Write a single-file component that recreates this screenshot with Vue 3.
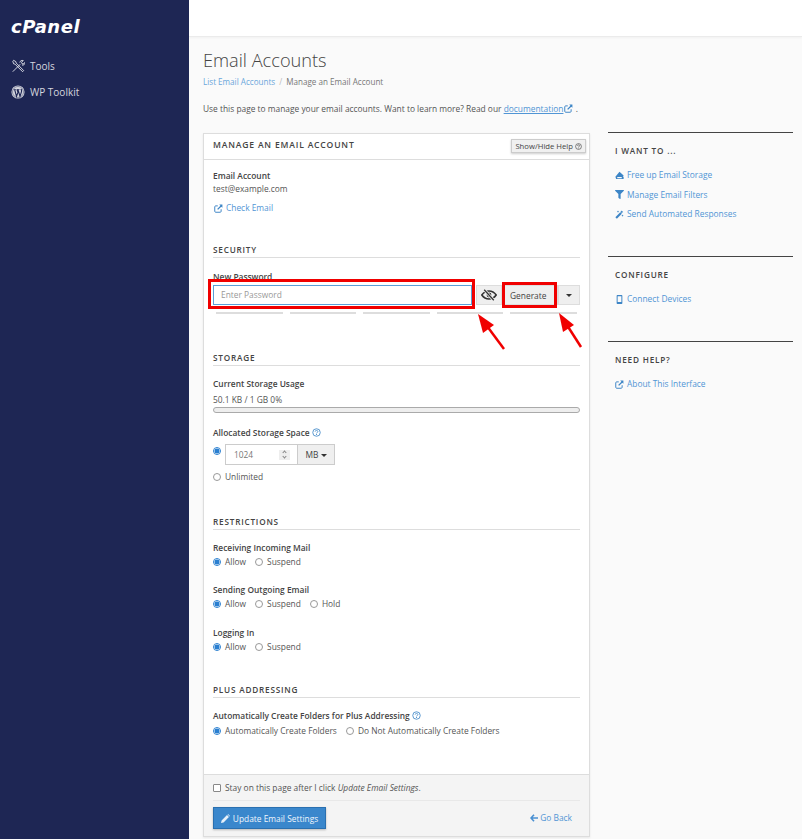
<script setup>
const wantTo = [
  { icon: 'eraser', label: 'Free up Email Storage' },
  { icon: 'filter', label: 'Manage Email Filters' },
  { icon: 'wand', label: 'Send Automated Responses' },
]
const restrictions = [
  { label: 'Receiving Incoming Mail', options: ['Allow', 'Suspend'] },
  { label: 'Sending Outgoing Email', options: ['Allow', 'Suspend', 'Hold'] },
  { label: 'Logging In', options: ['Allow', 'Suspend'] },
]
</script>

<template>
  <div class="layout">
    <aside class="sidebar">
      <div class="logo">cPanel</div>
      <a class="nav-item">
        <svg class="nav-icon" viewBox="0 0 16 16" fill="none" stroke="#e8e9ef" stroke-width="1">
          <path d="M2 14.500 10.500 6M10 4c.4-1.800 2.200-2.800 4-2.200l-2 2 .5 1.500 1.500.5 2-2c.4 1.800-1.200 3.500-3.500 3.200" />
          <path d="M2 2.500 3 1.500 5.500 3l.3 1.500 8.700 8.700-1.300 1.300L4.500 5.800 3 5.500z" />
        </svg>
        Tools
      </a>
      <a class="nav-item">
        <svg class="nav-icon" viewBox="0 0 16 16">
          <circle cx="8" cy="8" r="7.500" fill="#d5d6df" />
          <circle cx="8" cy="8" r="6.300" fill="none" stroke="#1e2654" stroke-width=".5" />
          <path d="M3 5.200h2.600M6.500 5.200h3.200M11 5 12.800 5" stroke="#1e2654" stroke-width=".8" />
          <path d="M4.200 5.200 6.300 13 8 8.300 6.900 5.200M8 5.200 10.300 13 12 7.500c.3-1 0-1.800-.5-2.500" fill="none" stroke="#1e2654" stroke-width="1.300" />
        </svg>
        WP Toolkit
      </a>
    </aside>

    <div class="main">
      <div class="topbar"></div>
      <div class="content">
        <h1>Email Accounts</h1>
        <div class="breadcrumb"><a>List Email Accounts</a><span class="sep">/</span>Manage an Email Account</div>
        <p class="intro">
          Use this page to manage your email accounts. Want to learn more? Read our
          <a class="doc">documentation</a>
          <svg class="ico ext" viewBox="0 0 12 12"><use href="#ext-icon" /></svg> .
        </p>

        <div class="columns">
          <section class="card">
            <header class="card-head">
              <span>MANAGE AN EMAIL ACCOUNT</span>
              <button class="help-btn">Show/Hide Help
                <svg class="q" viewBox="0 0 12 12"><use href="#q-icon" /></svg>
              </button>
            </header>

            <div class="card-body">
              <div class="field-label first">Email Account</div>
              <div class="plain account">test@example.com</div>
              <a class="link check"><svg class="ico" viewBox="0 0 12 12"><use href="#ext-icon" /></svg>Check Email</a>

              <h2 class="section security">SECURITY</h2>
              <div class="field-label pw-label">New Password</div>
              <div class="pw-row">
                <input class="pw-input" placeholder="Enter Password" />
                <button class="eye-btn">
                  <svg viewBox="0 0 20 14" width="16" height="12">
                    <path d="M1 7c2.500-3.500 5.500-5 9-5s6.500 1.500 9 5c-2.500 3.500-5.500 5-9 5s-6.500-1.500-9-5z" fill="none" stroke="#333" stroke-width="2" />
                    <circle cx="10" cy="7" r="3" fill="#333" />
                    <path d="M4 .5l12 13" stroke="#efefef" stroke-width="3.600" />
                    <path d="M4 .5l12 13" stroke="#333" stroke-width="1.600" />
                  </svg>
                </button>
                <button class="gen-btn">Generate</button>
                <button class="caret-btn"><i class="caret"></i></button>
                <div class="red-box box-input"></div>
                <div class="red-box box-gen"></div>
              </div>
              <div class="strength"><i></i><i></i><i></i><i></i><i></i></div>

              <h2 class="section storage">STORAGE</h2>
              <div class="field-label usage-label">Current Storage Usage</div>
              <div class="plain usage">50.1 KB / 1 GB 0%</div>
              <div class="progress"></div>
              <div class="field-label alloc-label">Allocated Storage Space
                <svg class="q blue" viewBox="0 0 12 12"><use href="#q-icon" /></svg>
              </div>
              <div class="alloc-row">
                <span class="radio on"></span>
                <div class="num-input">
                  <span>1024</span>
                  <span class="spin"><i class="up"></i><i class="down"></i></span>
                </div>
                <button class="mb-btn">MB <i class="caret"></i></button>
              </div>
              <div class="radio-row unlimited"><span class="radio"></span>Unlimited</div>

              <h2 class="section restrictions">RESTRICTIONS</h2>
              <div v-for="r in restrictions" :key="r.label" class="restriction">
                <div class="field-label">{{ r.label }}</div>
                <div class="radio-row">
                  <template v-for="(o, i) in r.options" :key="o">
                    <span class="radio" :class="{ on: i === 0 }"></span><span class="opt">{{ o }}</span>
                  </template>
                </div>
              </div>

              <h2 class="section plus">PLUS ADDRESSING</h2>
              <div class="field-label plus-label">Automatically Create Folders for Plus Addressing
                <svg class="q blue" viewBox="0 0 12 12"><use href="#q-icon" /></svg>
              </div>
              <div class="radio-row">
                <span class="radio on"></span><span class="opt">Automatically Create Folders</span>
                <span class="radio"></span><span class="opt">Do Not Automatically Create Folders</span>
              </div>
            </div>

            <footer class="card-foot">
              <label class="stay"><span class="check-box"></span>Stay on this page after I click&nbsp;<em>Update Email Settings</em>.</label>
              <div class="actions">
                <button class="update-btn">
                  <svg viewBox="0 0 12 12" width="9" height="9"><path d="M0 12l.8-3.400L8 1.400l2.600 2.600-7.200 7.200zM8.800.6l.6-.6 2.600 2.600-.6.6z" fill="#e6f0f9" /></svg>
                  Update Email Settings
                </button>
                <a class="link back">
                  <svg viewBox="0 0 12 12" width="8" height="8"><path d="M6 1 1.500 6 6 11M2 6h10" fill="none" stroke="#4a90d2" stroke-width="2.400" /></svg>
                  Go Back
                </a>
              </div>
            </footer>
          </section>

          <aside class="side">
            <div class="side-block want">
              <h3>I WANT TO ...</h3>
              <a v-for="w in wantTo" :key="w.label" class="link side-link">
                <svg class="ico" viewBox="0 0 12 12" v-if="w.icon === 'eraser'"><path d="M6 1 11.500 6 10.500 7.500H11.500V10.500H1.500L.5 7.500zM3 8v1.500h6V8z" fill="#3d85c6" fill-rule="evenodd" /></svg>
                <svg class="ico" viewBox="0 0 512 512" v-else-if="w.icon === 'filter'"><path d="M487.976 0H24.028C2.71 0-8.047 25.866 7.058 40.971L192 225.941V432c0 7.831 3.821 15.170 10.237 19.662l80 55.980C298.020 518.690 320 507.493 320 487.980V225.941l184.947-184.970C520.021 25.896 509.338 0 487.976 0z" fill="#3d85c6" /></svg>
                <svg class="ico" viewBox="0 0 12 12" v-else><path d="M.5 9.500 7 3l2 2-6.500 6.500zM9 .5l.7 1.300 1.300.7-1.300.7L9 4.500l-.7-1.300L7 2.500l1.300-.7zM4 .8l.5 1 1 .5-1 .5-.5 1-.5-1-1-.5 1-.5zM10 6l.5 1 1 .5-1 .5-.5 1-.5-1-1-.5 1-.5z" fill="#3d85c6" /></svg>
                {{ w.label }}
              </a>
            </div>
            <div class="side-block configure">
              <h3>CONFIGURE</h3>
              <a class="link side-link">
                <svg class="ico" viewBox="0 0 12 12"><path d="M3.200 0h5.600c.6 0 1 .4 1 1v10c0 .6-.4 1-1 1H3.200c-.6 0-1-.4-1-1V1c0-.6.4-1 1-1zm.3 1.500v7.800h5V1.500z" fill="#3d85c6" fill-rule="evenodd" /></svg>
                Connect Devices
              </a>
            </div>
            <div class="side-block need">
              <h3>NEED HELP?</h3>
              <a class="link side-link"><svg class="ico" viewBox="0 0 12 12"><use href="#ext-icon" /></svg>About This Interface</a>
            </div>
          </aside>
        </div>
      </div>
    </div>

    <svg class="arrows" viewBox="0 0 802 839" width="802" height="839">
      <path d="M504 349 484 322" stroke="#f00000" stroke-width="2.500" fill="none" />
      <path d="M478 314 494 325 483 333z" fill="#f00000" />
      <path d="M581 347 565 322" stroke="#f00000" stroke-width="2.500" fill="none" />
      <path d="M559 313 574 325 563 332z" fill="#f00000" />
    </svg>

    <svg width="0" height="0" class="defs">
      <defs>
        <g id="ext-icon">
          <path d="M5 2.500H2.200C1.500 2.500 1 3 1 3.700v6.100c0 .7.5 1.200 1.200 1.200h6.100c.7 0 1.200-.5 1.200-1.200V7" fill="none" stroke="#3d85c6" stroke-width="1.300" />
          <path d="M7 .8h4.200V5L9.700 3.500 5.500 7.800 4.200 6.500l4.300-4.200z" fill="#3d85c6" />
        </g>
        <g id="q-icon">
          <circle cx="6" cy="6" r="5" fill="none" stroke="currentColor" stroke-width="1.100" />
          <path d="M4.200 4.800C4.300 3.800 5 3.200 6 3.200s1.800.6 1.800 1.500c0 1.300-1.700 1.300-1.700 2.500" fill="none" stroke="currentColor" stroke-width="1.100" />
          <rect x="5.400" y="8" width="1.300" height="1.200" fill="currentColor" />
        </g>
      </defs>
    </svg>
  </div>
</template>

<style>
html, body { margin: 0; background: #fafafa; }
</style>

<style scoped>
* { box-sizing: border-box; }
.layout {
  position: relative;
  display: flex;
  width: 802px;
  height: 839px;
  overflow: hidden;
  font-family: "Open Sans", sans-serif;
  font-size: 8.400px;
  line-height: 12px;
  color: #555;
  background: #fafafa;
}
a { color: #5095d5; }

.sidebar {
  width: 189px;
  flex: none;
  background: #1e2654;
  padding-top: 14px;
}
.logo {
  margin: 0 0 13px 11px;
  height: 26px;
  color: #fff;
  font-family: "DejaVu Sans", sans-serif;
  font-size: 18px;
  font-weight: 700;
  font-style: italic;
  line-height: 26px;
  letter-spacing: 0.500px;
}
.nav-item {
  display: flex;
  align-items: center;
  gap: 5px;
  height: 26px;
  padding-left: 11px;
  font-size: 10px;
  color: #d5d6df;
}
.nav-icon { width: 14px; height: 14px; }

.main { flex: 1; min-width: 0; }
.topbar {
  height: 37px;
  background: #fff;
  border-bottom: 1px solid #ebebeb;
  box-shadow: 0 1px 2px rgba(0,0,0,.04);
}
.content { padding: 11px 9px 0 14px; }
h1 {
  margin: 0;
  font-size: 18.200px;
  font-weight: 300;
  line-height: 24px;
  color: #444;
}
.breadcrumb { margin-top: 3px; color: #777; height: 14px; line-height: 14px; font-size: 8.100px; }
.breadcrumb a { color: #6aa6da; }
.sep { color: #bbb; margin: 0 4px; }
.intro { margin: 13px 0 0; height: 14px; line-height: 14px; color: #555; }
.doc { text-decoration: underline; }
.ico { width: 9px; height: 9px; flex: none; }
.ext { vertical-align: -1px; margin-left: 1px; }

.columns { display: flex; align-items: flex-start; margin-top: 17px; }
.card {
  width: 387px;
  height: 704px;
  flex: none;
  display: flex;
  flex-direction: column;
  background: #fff;
  border: 1px solid #ddd;
  box-shadow: 0 1px 2px rgba(0,0,0,.08);
}
.card-head {
  height: 26px;
  flex: none;
  display: flex;
  align-items: flex-start;
  justify-content: space-between;
  padding: 5px 3px 0 9px;
  border-bottom: 1px solid #ddd;
  font-size: 8.600px;
  font-weight: 600;
  letter-spacing: 0.800px;
  color: #444;
}
.help-btn {
  margin-top: 0;
  height: 14px;
  padding: 0 3px;
  border: 1px solid #ccc;
  background: #f0f0f0;
  box-shadow: 0 1px 2px rgba(0,0,0,.2);
  font: 7.700px "Open Sans", sans-serif;
  color: #444;
  display: flex;
  align-items: center;
  gap: 2px;
  letter-spacing: 0;
}
.q { width: 7px; height: 7px; color: #444; }
.q.blue { color: #3d85c6; width: 9px; height: 9px; vertical-align: -1px; }

.card-body { flex: 1; padding: 0 9px; }
.field-label { font-weight: 600; color: #444; height: 12px; }
.first { margin-top: 10px; }
.plain { height: 12px; }
.account { margin-top: 1px; }
.link { display: flex; align-items: center; gap: 3px; color: #5095d5; }
.check { margin: 7px 0 0 1px; height: 12px; }

.section {
  margin: 0;
  height: 14px;
  font-size: 8.200px;
  font-weight: 600;
  letter-spacing: 0.800px;
  line-height: 11px;
  color: #444;
  border-bottom: 1px solid #ddd;
}
.security { margin-top: 30px; }
.pw-label { margin-top: 13px; }
.pw-row { position: relative; display: flex; height: 20px; margin-top: 2px; }
.pw-input {
  width: 259px;
  height: 20px;
  border: 1px solid #5a9fd8;
  padding: 0 7px 2px;
  font: 8.400px "Open Sans", sans-serif;
  outline: none;
}
.pw-input::placeholder { color: #999; }
.eye-btn {
  width: 26px;
  margin-left: 4px;
  padding: 0;
  display: flex;
  align-items: center;
  justify-content: center;
  background: #efefef;
  border: 1px solid #ddd;
}
.gen-btn {
  width: 54px;
  margin-left: 2px;
  padding: 0 0 0 5px;
  text-align: left;
  background: #efefef;
  border: 1px solid #ddd;
  font: 8.400px "Open Sans", sans-serif;
  color: #444;
}
.caret-btn {
  width: 22px;
  padding: 0;
  background: #efefef;
  border: 1px solid #ddd;
  display: flex;
  align-items: center;
  justify-content: center;
}
.caret {
  display: inline-block;
  border-top: 3px solid #333;
  border-left: 3px solid transparent;
  border-right: 3px solid transparent;
  vertical-align: 1px;
}
.red-box { position: absolute; border: 3px solid #f00000; }
.box-input { left: -5px; top: -6px; width: 267px; height: 30px; }
.box-gen { left: 289px; top: -3px; width: 55px; height: 26px; }
.strength { display: flex; gap: 7px; margin: 7px 3px 0; }
.strength i { flex: 1; height: 2px; background: #ddd; }

.storage { margin-top: 38px; }
.usage-label { margin-top: 12px; }
.usage { margin-top: 4px; }
.progress {
  height: 6px;
  margin-top: 1px;
  border: 1px solid #aaa;
  border-radius: 3px;
  background: #eee;
}
.alloc-label { margin-top: 14px; }
.alloc-row { display: flex; margin-top: 5px; height: 21px; }
.radio {
  width: 8px;
  height: 8px;
  flex: none;
  border: 1px solid #999;
  border-radius: 50%;
  background: #fff;
  margin-right: 4px;
}
.radio.on {
  border: 1px solid #2a7fd0;
  background: radial-gradient(circle, #2a7fd0 0 2.300px, #fff 2.700px);
}
.alloc-row .radio { margin-top: 3px; }
.num-input {
  width: 73px;
  display: flex;
  align-items: center;
  justify-content: space-between;
  padding: 0 8px;
  border: 1px solid #ccc;
  color: #777;
}
.spin {
  width: 11px;
  height: 10px;
  background: #eee;
  display: flex;
  flex-direction: column;
  align-items: center;
  justify-content: center;
  gap: 1px;
  margin-right: -1px;
}
.spin i { width: 3px; height: 3px; border-left: 1px solid #888; border-top: 1px solid #888; }
.spin .up { transform: rotate(45deg); }
.spin .down { transform: rotate(225deg); }
.mb-btn {
  width: 37px;
  padding: 0;
  background: #efefef;
  border: 1px solid #ccc;
  border-left: 0;
  font: 8.400px "Open Sans", sans-serif;
  color: #444;
}
.radio-row { display: flex; align-items: center; height: 14px; }
.opt { margin-right: 9px; }
.unlimited { margin-top: 5px; }

.restrictions { margin-top: 32px; }
.restriction { margin-top: 11px; height: 30px; }
.restriction + .restriction { margin-top: 12px; }
.restriction + .restriction + .restriction { margin-top: 13px; }
.restriction .field-label { height: 14px; line-height: 13px; }

.plus { margin-top: 28px; }
.plus-label { margin-top: 12px; height: 14px; }

.card-foot {
  height: 62px;
  flex: none;
  padding: 6px 9px 0;
  background: #f4f4f4;
  border-top: 1px solid #ddd;
}
.stay {
  display: flex;
  align-items: center;
  height: 20px;
  border-bottom: 1px solid #e8e8e8;
  padding-bottom: 6px;
}
.check-box {
  width: 8px;
  height: 8px;
  margin-right: 4px;
  background: #fff;
  border: 1px solid #888;
  border-radius: 1px;
}
.actions { display: flex; justify-content: space-between; align-items: center; margin-top: 6px; }
.update-btn {
  width: 113px;
  height: 22px;
  padding: 0;
  background: #3a87cc;
  border: 1px solid #2a70b0;
  box-shadow: 0 1px 2px rgba(0,0,0,.25);
  color: #f0f6fc;
  font: 500 8.400px "Open Sans", sans-serif;
  display: flex;
  align-items: center;
  justify-content: center;
  gap: 3px;
}
.back { margin-right: 8px; gap: 2px; }

.side { width: 185px; margin-left: 18px; margin-top: -1px; }
.side-block { border-top: 1px solid #444; padding-top: 12px; }
.side-block h3 {
  margin: 0 0 12px 7px;
  height: 12px;
  font-size: 8.200px;
  font-weight: 600;
  letter-spacing: 0.800px;
  color: #444;
}
.side-link { margin-left: 7px; height: 12px; margin-bottom: 7.500px; }
.want { height: 124px; }
.configure { height: 85px; }

.arrows { position: absolute; left: 0; top: 0; pointer-events: none; }
.defs { position: absolute; }
</style>
